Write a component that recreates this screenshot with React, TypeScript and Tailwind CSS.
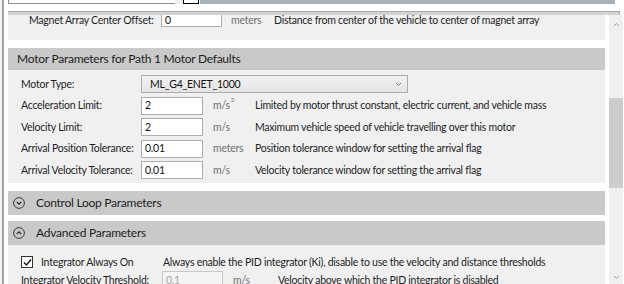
import React from "react";

const Chev = ({ up }: { up?: boolean }) => (
  <svg width="12" height="12" viewBox="0 0 12 12" className="shrink-0">
    <circle cx="6" cy="6" r="5.4" fill="none" stroke="#3a3a3a" strokeWidth="1" />
    {up ? (
      <polyline points="3.8,7 6,4.8 8.2,7" fill="none" stroke="#2a2a2a" strokeWidth="1.2" />
    ) : (
      <polyline points="3.8,5 6,7.2 8.2,5" fill="none" stroke="#2a2a2a" strokeWidth="1.2" />
    )}
  </svg>
);

const Input = ({ value, disabled }: { value: string; disabled?: boolean }) => (
  <div
    className={
      disabled
        ? "w-[61px] h-[18px] shrink-0 border border-[#c9c9c9] bg-[#f4f4f4] pl-[3px] flex items-center text-[#a6a6a6]"
        : "w-[62px] h-[18px] shrink-0 border border-[#abadb3] bg-white pl-[3px] flex items-center text-[#111]"
    }
  >
    {value}
  </div>
);

const MotorRow = ({ label, value, unit, desc }: { label: string; value: string; unit: React.ReactNode; desc: string }) => (
  <div className="flex items-center h-[18px] shrink-0">
    <div className="w-[120px] pl-[13px] box-content shrink-0 text-[#1e1e1e] whitespace-nowrap">{label}</div>
    <Input value={value} />
    <div className="w-[42px] pl-[10px] box-content shrink-0 text-[#707070] whitespace-nowrap">{unit}</div>
    <div className="text-[#1e1e1e] whitespace-nowrap">{desc}</div>
  </div>
);

export default function App() {
  return (
    <div className="w-[624px] h-[284px] overflow-hidden bg-white font-['Lato',sans-serif] text-[10.5px] tracking-[-0.25px] leading-none">
      <div className="flex h-full">
        <div className="w-[2px] shrink-0 bg-[#f3f3f3]" />
        <div className="w-[2px] shrink-0 bg-[#a3a3a3]" />
        <div className="w-[4px] shrink-0 bg-white" />
        <div className="flex-1 flex flex-col min-w-0">
          {/* top cut-off strip */}
          <div className="flex h-[4px] shrink-0">
            <div className="w-[167px] border-l border-b border-[#8d8d8d] bg-white" />
            <div className="w-[8px] bg-[#efefef]" />
            <div className="w-[16px] border-l border-r border-b border-black bg-white" />
            <div className="w-[1px]" />
            <div className="w-[415px] bg-[#a9b1b9]" />
          </div>
          <div className="h-[7px] shrink-0" />
          {/* horizontal line */}
          <div className="h-[4px] shrink-0 w-[612px] border-t border-r border-[#a9a9a9] bg-[#d3d3d3]" />
          {/* main */}
          <div className="flex flex-1 min-h-0">
            <div className="w-[597px] flex flex-col overflow-hidden">
              {/* magnet section (cut off at top) */}
              <div className="h-[25px] shrink-0 bg-[#f0f0f0] flex items-start">
                <div className="w-[132px] pl-[21px] box-content h-[11px] leading-[11px] mt-[0px] text-[#1e1e1e] whitespace-nowrap">Magnet Array Center Offset:</div>
                <div className="w-[61px] h-[12px] border-x border-b border-[#abadb3] bg-white pl-[3px] leading-[11px] text-[#111]">0</div>
                <div className="w-[43px] pl-[9px] box-content leading-[11px] text-[#707070]">meters</div>
                <div className="leading-[11px] text-[#1e1e1e] whitespace-nowrap">Distance from center of the vehicle to center of magnet array</div>
              </div>
              <div className="h-[8px] shrink-0 bg-white" />
              {/* Motor header */}
              <div className="h-[22px] shrink-0 bg-[#c9c9c9] flex items-center pl-[9px] text-[12px] text-[#1e1e1e]">
                Motor Parameters for Path 1 Motor Defaults
              </div>
              {/* Motor content */}
              <div className="bg-[#f0f0f0] shrink-0 pt-[5px] pb-[4px] flex flex-col gap-[3.5px]">
                <div className="flex items-center h-[18px] shrink-0">
                  <div className="w-[120px] pl-[13px] box-content shrink-0 text-[#1e1e1e]">Motor Type:</div>
                  <div className="w-[267px] h-[18px] border border-[#acacac] bg-gradient-to-b from-[#f2f2f2] to-[#e4e4e4] flex items-center pl-[8px] pr-[5px] text-[#111]">
                    <span className="flex-1">ML_G4_ENET_1000</span>
                    <svg width="7" height="5" viewBox="0 0 7 5">
                      <polyline points="1,1 3.5,3.5 6,1" fill="none" stroke="#777" strokeWidth="1" />
                    </svg>
                  </div>
                </div>
                <MotorRow
                  label="Acceleration Limit:"
                  value="2"
                  unit={
                    <span className="inline-flex items-start">
                      m/s<span className="text-[6.5px] relative -top-[3px] ml-[1px]">2</span>
                    </span>
                  }
                  desc="Limited by motor thrust constant, electric current, and vehicle mass"
                />
                <MotorRow label="Velocity Limit:" value="2" unit="m/s" desc="Maximum vehicle speed of vehicle travelling over this motor" />
                <MotorRow label="Arrival Position Tolerance:" value="0.01" unit="meters" desc="Position tolerance window for setting the arrival flag" />
                <MotorRow label="Arrival Velocity Tolerance:" value="0.01" unit="m/s" desc="Velocity tolerance window for setting the arrival flag" />
              </div>
              <div className="h-[8px] shrink-0 bg-white" />
              {/* Control loop header */}
              <div className="h-[24px] shrink-0 bg-[#c9c9c9] flex items-center pl-[5px] gap-[11px] text-[12px] text-[#1e1e1e]">
                <Chev />
                <span>Control Loop Parameters</span>
              </div>
              <div className="h-[6px] shrink-0 bg-white" />
              {/* Advanced header */}
              <div className="h-[24px] shrink-0 bg-[#c9c9c9] flex items-center pl-[5px] gap-[11px] text-[12px] text-[#1e1e1e]">
                <Chev up />
                <span>Advanced Parameters</span>
              </div>
              <div className="flex-1 shrink-0 bg-[#f0f0f0] pt-[8px] flex flex-col">
                <div className="flex items-center h-[18px] shrink-0 text-[#1e1e1e]">
                  <div className="pl-[13px] box-content w-[12px] shrink-0">
                    <div className="w-[12px] h-[12px] border border-[#333] bg-white flex items-center justify-center">
                      <svg width="9" height="9" viewBox="0 0 9 9">
                        <polyline points="1,4.5 3.5,7 8,1.5" fill="none" stroke="#111" strokeWidth="1.4" />
                      </svg>
                    </div>
                  </div>
                  <div className="w-[122px] pl-[8px] box-content shrink-0 whitespace-nowrap">Integrator Always On</div>
                  <div className="whitespace-nowrap">Always enable the PID integrator (Ki), disable to use the velocity and distance thresholds</div>
                </div>
                <div className="flex items-center h-[18px] shrink-0 text-[#1e1e1e]">
                  <div className="w-[141px] pl-[13px] box-content shrink-0 whitespace-nowrap">Integrator Velocity Threshold:</div>
                  <Input value="0.1" disabled />
                  <div className="w-[45px] pl-[10px] box-content shrink-0 text-[#707070]">m/s</div>
                  <div className="whitespace-nowrap">Velocity above which the PID integrator is disabled</div>
                </div>
              </div>
            </div>
            <div className="w-[4px] shrink-0 bg-white" />
            {/* scrollbar */}
            <div className="w-[14px] shrink-0 bg-[#f0f0f0] flex flex-col">
              <div className="h-[18px] flex items-center justify-center">
                <svg width="7" height="5" viewBox="0 0 7 5">
                  <polyline points="1,4 3.5,1.5 6,4" fill="none" stroke="#a0a0a0" strokeWidth="1" />
                </svg>
              </div>
              <div className="h-[65px]" />
              <div className="h-[90px] bg-[#cdcdcd]" />
              <div className="flex-1" />
              <div className="h-[14px] flex items-center justify-center">
                <svg width="7" height="5" viewBox="0 0 7 5">
                  <polyline points="1,1 3.5,3.5 6,1" fill="none" stroke="#a0a0a0" strokeWidth="1" />
                </svg>
              </div>
            </div>
          </div>
        </div>
      </div>
    </div>
  );
}
